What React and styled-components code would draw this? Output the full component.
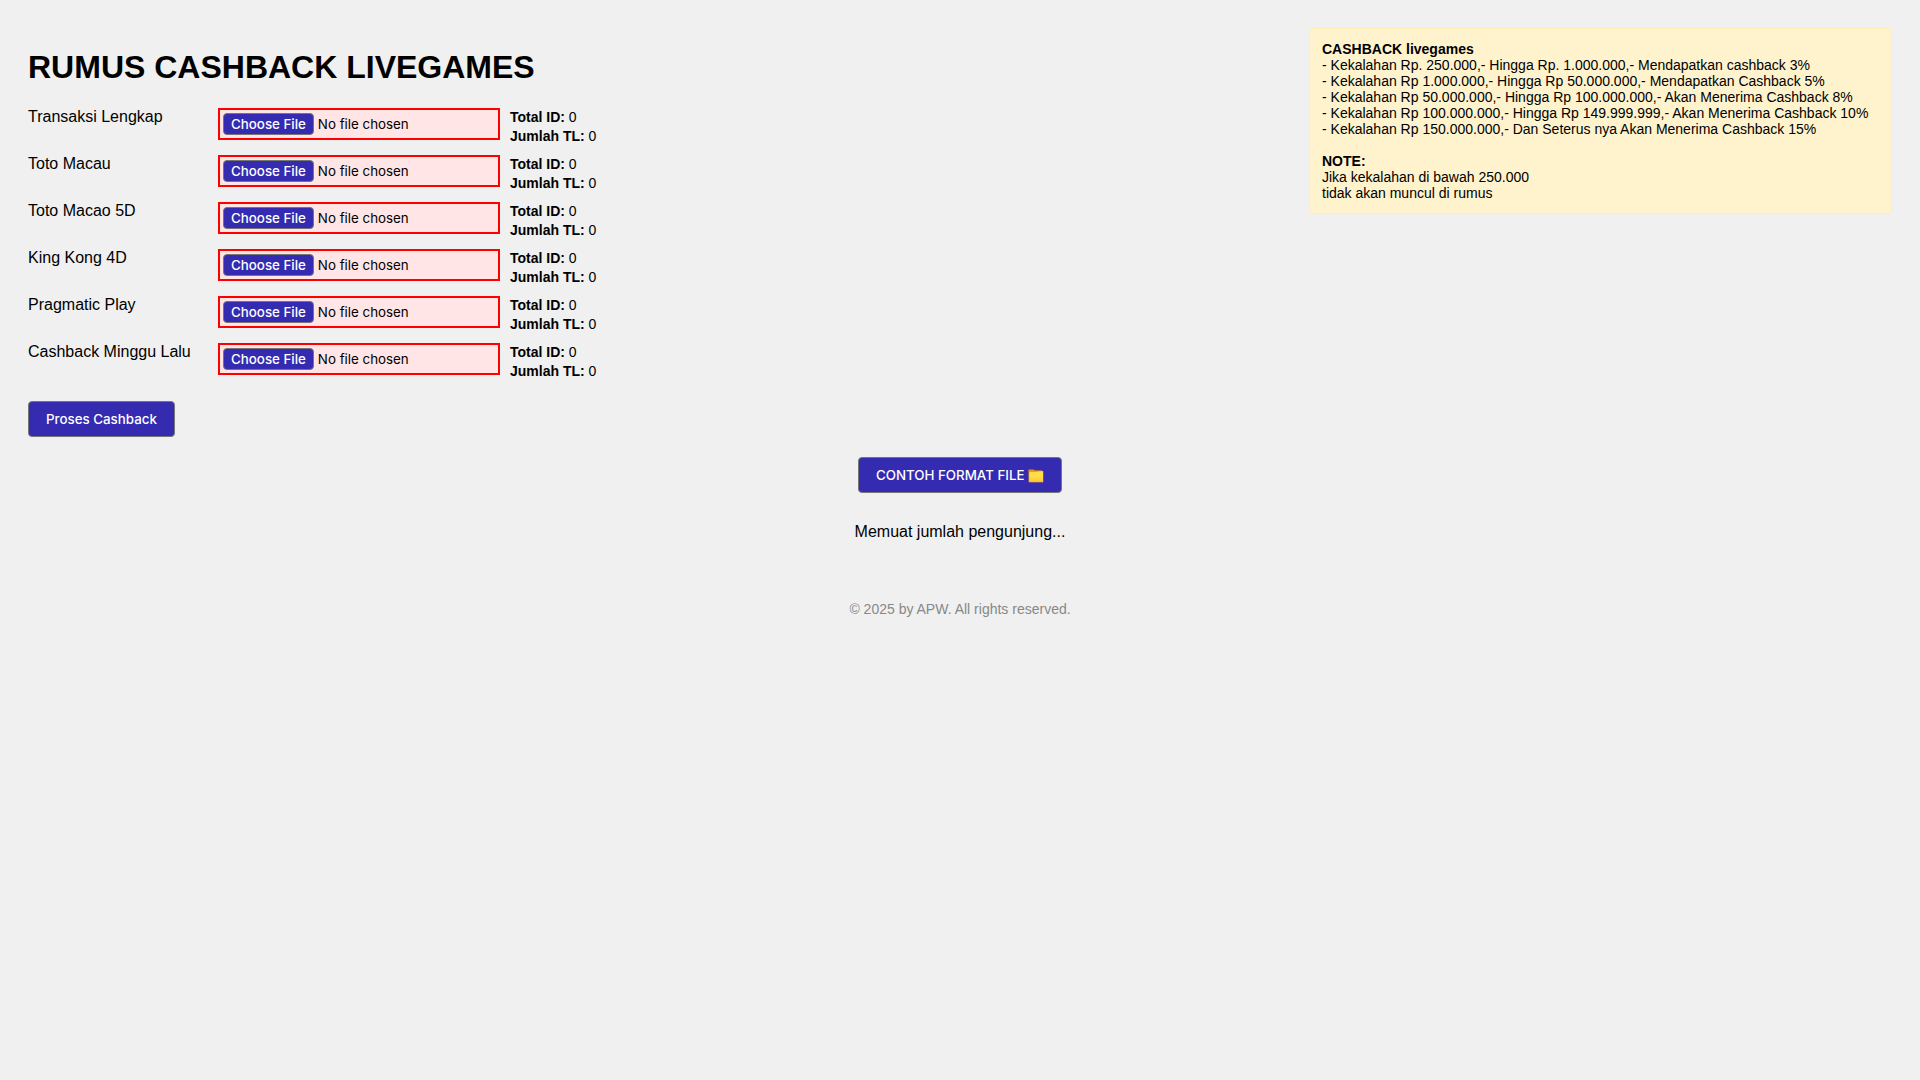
import React from 'react'
import styled, { createGlobalStyle, css } from 'styled-components'

const colors = {
    page: '#f0f0f0',
    primary: '#342bb1',
    edge: '#767676',
    error: '#ff0000',
    errorBg: '#ffe5e5',
    noteBg: '#fff3cd',
    noteEdge: '#ffeeba',
    gray: '#888888'
}

const fonts = {
    primary: '"Liberation Sans", Arial, sans-serif',
    control: 'Inter, sans-serif'
}

const sources = [
    { id: 'transaksi', label: 'Transaksi Lengkap' },
    { id: 'macau', label: 'Toto Macau' },
    { id: 'macao5d', label: 'Toto Macao 5D' },
    { id: 'kingkong', label: 'King Kong 4D' },
    { id: 'pragmatic', label: 'Pragmatic Play' },
    { id: 'minggulalu', label: 'Cashback Minggu Lalu' }
]

const rules = [
    '- Kekalahan Rp. 250.000,- Hingga Rp. 1.000.000,- Mendapatkan cashback 3%',
    '- Kekalahan Rp 1.000.000,- Hingga Rp 50.000.000,- Mendapatkan Cashback 5%',
    '- Kekalahan Rp 50.000.000,- Hingga Rp 100.000.000,- Akan Menerima Cashback 8%',
    '- Kekalahan Rp 100.000.000,- Hingga Rp 149.999.999,- Akan Menerima Cashback 10%',
    '- Kekalahan Rp 150.000.000,- Dan Seterus nya Akan Menerima Cashback 15%'
]

function FileRow({ id, label, total, jumlah }) {
    return (
        <Row>
            <RowLabel htmlFor={id}>{label}</RowLabel>
            <FileInput type="file" id={id} />
            <Stats>
                <div><b>Total ID:</b> {total}</div>
                <div><b>Jumlah TL:</b> {jumlah}</div>
            </Stats>
        </Row>
    )
}

function FolderIcon() {
    return (
        <svg width="16" height="14" viewBox="0 0 16 14" aria-hidden="true">
            <defs>
                <linearGradient id="folder-front" x1="0" y1="0" x2="0" y2="1">
                    <stop offset="0" stopColor="#ffd83c" />
                    <stop offset="0.4" stopColor="#ffe04e" />
                    <stop offset="1" stopColor="#fdc830" />
                </linearGradient>
            </defs>
            <path d="M0.4 0.6 L5.6 0.6 L6.4 1.2 L13.8 1.6 L15 2.6 L15 13 L0.6 13 Z" fill="#dd9216" />
            <path d="M1.4 2.8 L9.4 2.8 L10.2 2.2 L15.2 2.2 L15.2 13 L1.1 13 Z" fill="url(#folder-front)" />
            <path d="M0.9 13.1 L15.2 13.1" stroke="#e8a624" strokeWidth="0.6" />
        </svg>
    )
}

function App() {
    return (
        <React.Fragment>
            <GlobalStyle />
            <Page>
                <Top>
                    <main>
                        <Title>RUMUS CASHBACK LIVEGAMES</Title>
                        <Rows>
                            {sources.map(item => (
                                <FileRow key={item.id} id={item.id} label={item.label} total={0} jumlah={0} />
                            ))}
                        </Rows>
                        <Button type="button">Proses Cashback</Button>
                    </main>
                    <Note>
                        <b>CASHBACK livegames</b>
                        {rules.map(rule => <div key={rule}>{rule}</div>)}
                        <NoteFooter>
                            <b>NOTE:</b>
                            <div>Jika kekalahan di bawah 250.000</div>
                            <div>tidak akan muncul di rumus</div>
                        </NoteFooter>
                    </Note>
                </Top>
                <Bottom>
                    <Button type="button">CONTOH FORMAT FILE <FolderIcon /></Button>
                    <Visitors>Memuat jumlah pengunjung...</Visitors>
                    <Footer>© 2025 by APW. All rights reserved.</Footer>
                </Bottom>
            </Page>
        </React.Fragment>
    )
}

const GlobalStyle = createGlobalStyle`
    body {
        margin: 0;
        background: ${colors.page};
        color: #000;
        font-family: ${fonts.primary};
        font-size: 16px;
    }
`

const buttonLook = css`
    color: #fff;
    background: ${colors.primary};
    border: 1px solid ${colors.edge};
    border-radius: 4px;
    font-family: ${fonts.control};
    font-weight: 500;
`

const Page = styled.div`
    padding: 28px;
`
const Top = styled.div`
    display: flex;
    justify-content: space-between;
    align-items: flex-start;
`
const Title = styled.h1`
    margin: 20px 0 22px;
    font-size: 32px;
    line-height: 38px;
`
const Rows = styled.div`
    display: grid;
    gap: 9px;
    margin-bottom: 20px;
`
const Row = styled.div`
    display: grid;
    grid-template-columns: 180px 282px auto;
    column-gap: 10px;
    align-items: start;
`
const RowLabel = styled.label`
    line-height: 18px;
`
const FileInput = styled.input`
    box-sizing: border-box;
    width: 100%;
    height: 32px;
    padding: 3px;
    border: 2px solid ${colors.error};
    background: ${colors.errorBg};
    color: #000;
    font-family: ${fonts.control};

    &::file-selector-button {
        ${buttonLook}
        height: 22px;
        padding: 0 7px;
        margin: 0 4px 0 0;
    }
`
const Stats = styled.div`
    font-size: 14px;
    line-height: 19px;
`
const Button = styled.button`
    ${buttonLook}
    height: 36px;
    padding: 0 17px;
    cursor: pointer;

    & svg {
        vertical-align: -3px;
    }
`
const Note = styled.aside`
    box-sizing: border-box;
    min-width: 583px;
    padding: 12px;
    border: 1px solid ${colors.noteEdge};
    border-radius: 4px;
    background: ${colors.noteBg};
    font-size: 14px;
    line-height: 16px;
`
const NoteFooter = styled.div`
    margin-top: 16px;
`
const Bottom = styled.div`
    display: flex;
    flex-direction: column;
    align-items: center;
    margin-top: 20px;
`
const Visitors = styled.p`
    margin: 30px 0 0;
    line-height: 18px;
`
const Footer = styled.footer`
    margin-top: 60px;
    color: ${colors.gray};
    font-size: 14px;
    line-height: 16px;
`

export default App
